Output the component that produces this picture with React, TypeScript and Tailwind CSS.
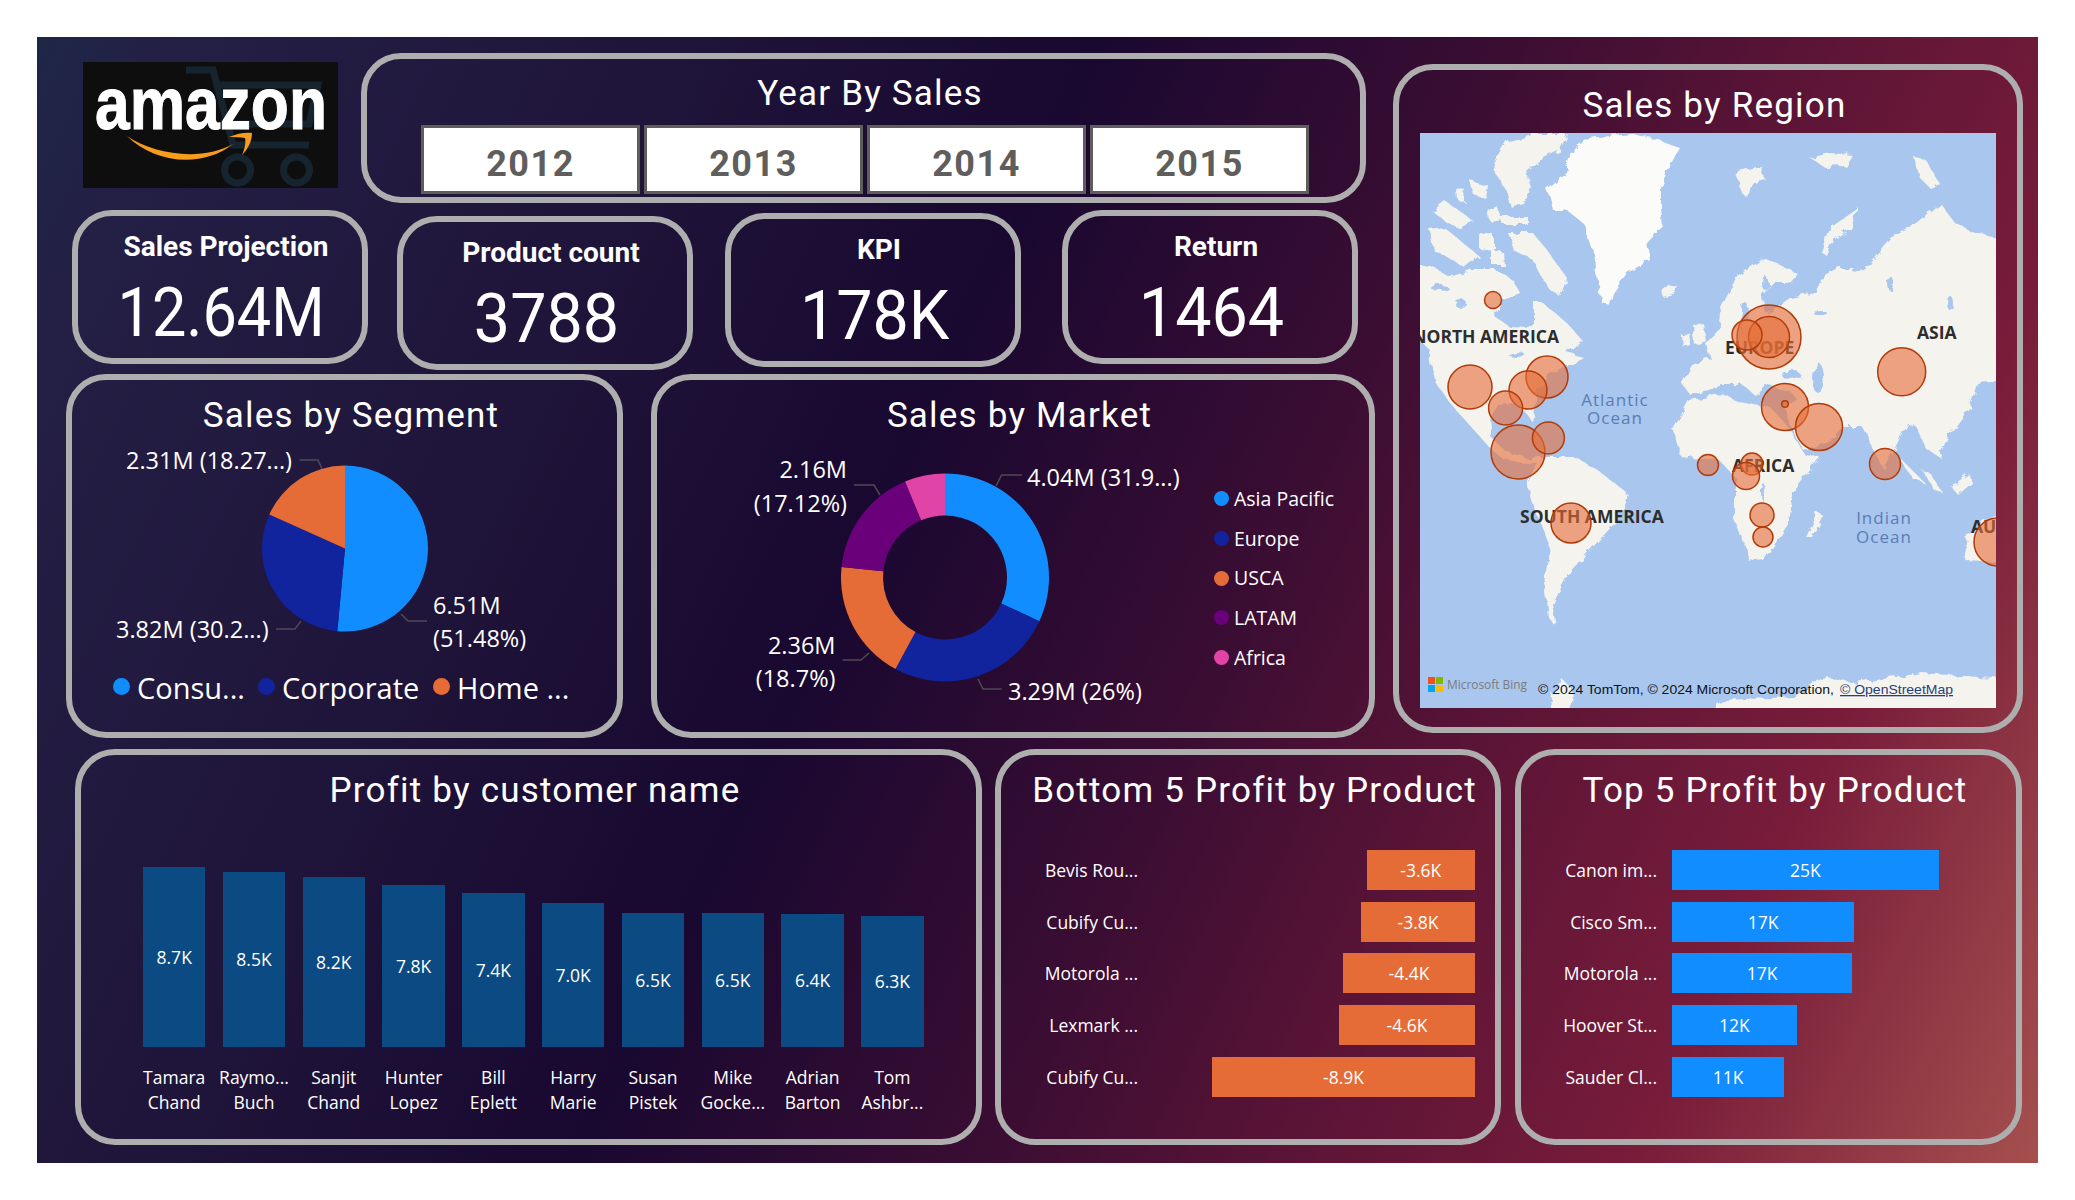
import React from "react";

const BLUE = "#118DFF", NAVY = "#12239E", ORANGE = "#E66C37", PURPLE = "#6B007B", PINK = "#E044A7";

function polar(cx: number, cy: number, r: number, f: number) {
  const a = f * 2 * Math.PI - Math.PI / 2;
  return [cx + r * Math.cos(a), cy + r * Math.sin(a)];
}
function sector(cx: number, cy: number, R: number, r: number, a: number, b: number) {
  const [x1, y1] = polar(cx, cy, R, a);
  const [x2, y2] = polar(cx, cy, R, b);
  const large = b - a > 0.5 ? 1 : 0;
  if (r === 0) return `M${cx},${cy}L${x1},${y1}A${R},${R} 0 ${large} 1 ${x2},${y2}Z`;
  const [x3, y3] = polar(cx, cy, r, b);
  const [x4, y4] = polar(cx, cy, r, a);
  return `M${x1},${y1}A${R},${R} 0 ${large} 1 ${x2},${y2}L${x3},${y3}A${r},${r} 0 ${large} 0 ${x4},${y4}Z`;
}
function slices(vals: [number, string][], cx: number, cy: number, R: number, r: number) {
  let acc = 0;
  return vals.map(([v, c], i) => {
    const d = sector(cx, cy, R, r, acc, acc + v);
    acc += v;
    return <path key={i} d={d} fill={c} />;
  });
}

function Title({ children }: { children: React.ReactNode }) {
  return (
    <div className="mt-[13px] h-[46px] pl-[13px] text-center font-['Roboto',sans-serif] text-[35px] leading-[46px] tracking-[1.2px] text-white">
      {children}
    </div>
  );
}

function Logo() {
  return (
    <svg viewBox="0 0 255 126" className="mt-[9px] ml-[46px] h-[126px] w-[255px] shrink-0 bg-[#0e0e0e]">
      <g fill="none" stroke="#16242f" strokeWidth="7">
        <path d="M103,8H130L150,83H226" />
        <path d="M132,23H235L226,62H143" />
        <circle cx="154.6" cy="108" r="13" />
        <circle cx="213.5" cy="108" r="13" />
      </g>
      <text x="12" y="67" fontFamily="'Liberation Sans',sans-serif" fontWeight="700" fontSize="74" fill="#fff" stroke="#fff" strokeWidth="1" textLength="232" lengthAdjust="spacingAndGlyphs">
        amazon
      </text>
      <path d="M44,74C70,92 118,100 150,82C120,106 72,102 44,74Z" fill="#f79c1d" />
      <path d="M146,75C155,71 163,70 169,71C169,79 165,87 159,93C162,86 163,80 162,76C157,75 151,75 146,75Z" fill="#f79c1d" />
    </svg>
  );
}

function YearPanel() {
  const years = ["2012", "2013", "2014", "2015"];
  return (
    <div className="ml-[23px] box-border h-[150px] w-[1005px] rounded-[40px] border-[6px] border-[#aeaeae]">
      <div className="mt-[12px] h-[46px] pl-[13px] text-center font-['Roboto',sans-serif] text-[35px] leading-[46px] tracking-[1.2px] text-white">Year By Sales</div>
      <div className="mt-[8px] ml-[54px] flex gap-[4px]">
        {years.map((y) => (
          <div key={y} className="box-border h-[69px] w-[219px] border-[3px] border-[#605e5c] bg-white pt-[13px] text-center font-['Roboto',sans-serif] text-[36px] leading-[46px] font-bold tracking-[1.5px] text-[#605e5c]">
            {y}
          </div>
        ))}
      </div>
    </div>
  );
}

function Card({ label, value, cls, vcls }: { label: string; value: string; cls: string; vcls: string }) {
  return (
    <div className={`box-border h-[154px] w-[296px] rounded-[40px] border-[6px] border-[#aeaeae] text-center font-['Roboto',sans-serif] text-white ${cls}`}>
      <div className="mt-[13px] h-[36px] pl-[12px] text-[28px] leading-[36px] font-bold">{label}</div>
      <div className="mt-[12px] pl-[3px] text-[68px] leading-[72px] font-normal">
        <span className={`inline-block ${vcls}`}>{value}</span>
      </div>
    </div>
  );
}

function Leader({ d }: { d: string }) {
  return <path d={d} fill="none" stroke="#4d4a55" strokeWidth="1.5" />;
}

function SegmentPanel() {
  const legend = [
    { c: BLUE, t: "Consu...", w: "w-[145px]" },
    { c: NAVY, t: "Corporate", w: "w-[175px]" },
    { c: ORANGE, t: "Home ...", w: "w-[140px]" },
  ];
  return (
    <div className="ml-[29px] box-border h-[364px] w-[557px] rounded-[40px] border-[6px] border-[#aeaeae]">
      <Title>Sales by Segment</Title>
      <svg viewBox="0 0 545 232" className="block h-[232px] w-[545px] font-['Open_Sans',sans-serif]" fill="#fff" fontSize="23.5">
        {slices([[0.5148, BLUE], [0.3025, NAVY], [0.1827, ORANGE]], 273, 109.5, 83, 0)}
        <Leader d="M227.5,21H246L250,30" />
        <Leader d="M204,190H223L229,182" />
        <Leader d="M329,175L336,182H355" />
        <text x="54" y="30">2.31M (18.27...)</text>
        <text x="44" y="199">3.82M (30.2...)</text>
        <text x="361" y="175">6.51M</text>
        <text x="361" y="208">(51.48%)</text>
      </svg>
      <div className="flex h-[34px] pl-[41px] font-['Open_Sans',sans-serif] text-[29px] leading-[34px] text-white">
        {legend.map((l) => (
          <div key={l.t} className={`flex gap-[7px] ${l.w}`}>
            <span className="mt-[7px] h-[17px] w-[17px] shrink-0 rounded-full" style={{ background: l.c }} />
            <span className="whitespace-nowrap">{l.t}</span>
          </div>
        ))}
      </div>
    </div>
  );
}

function MarketPanel() {
  const legend: [string, string][] = [["Asia Pacific", BLUE], ["Europe", NAVY], ["USCA", ORANGE], ["LATAM", PURPLE], ["Africa", PINK]];
  return (
    <div className="ml-[28px] box-border h-[364px] w-[724px] rounded-[40px] border-[6px] border-[#aeaeae]">
      <Title>Sales by Market</Title>
      <div className="flex">
        <svg viewBox="0 0 557 295" className="block h-[295px] w-[557px] shrink-0 font-['Open_Sans',sans-serif]" fill="#fff" fontSize="23.5">
          {slices([[0.319, BLUE], [0.26, NAVY], [0.187, ORANGE], [0.1712, PURPLE], [0.0628, PINK]], 288, 138.5, 104, 62)}
          <Leader d="M339,47L344.6,36H365" />
          <Leader d="M321,240L326,250H344.6" />
          <Leader d="M185.5,221H204L212,214" />
          <Leader d="M197,46H217L223,56" />
          <text x="370" y="47">4.04M (31.9...)</text>
          <text x="351" y="261">3.29M (26%)</text>
          <text x="178.5" y="215" textAnchor="end">2.36M</text>
          <text x="178.5" y="248" textAnchor="end">(18.7%)</text>
          <text x="190" y="39" textAnchor="end">2.16M</text>
          <text x="190" y="73" textAnchor="end">(17.12%)</text>
        </svg>
        <div className="flex flex-col pt-[40px] font-['Open_Sans',sans-serif] text-[19.5px] leading-[40px] text-white">
          {legend.map(([t, c]) => (
            <div key={t} className="flex h-[39.7px] items-center gap-[5px]">
              <span className="h-[15px] w-[15px] rounded-full" style={{ background: c }} />
              <span>{t}</span>
            </div>
          ))}
        </div>
      </div>
    </div>
  );
}

function WorldMap() {
  const land = [
    // North and Central America
    "M-20,127L13,134L30,144L50,137L77,137L93,147L100,160L83,167L75,184L90,194L115,195L115,170L123,170L147,190L162,207L147,220L163,224L140,237L128,240L118,258L113,290L106,280L95,270L78,272L70,285L72,305L85,318L100,322L112,328L124,324L120,332L107,330L85,328L70,315L52,295L30,270L16,250L12,235L8,215L-20,190Z",
    // South America
    "M124,324L153,324L175,335L207,360L195,390L170,417L145,444L132,470L136,494L128,484L124,450L130,414L111,367L107,350Z",
    // Africa
    "M253,297L269,267L303,262L330,272L352,276L370,296L385,322L400,324L373,360L369,390L344,427L330,429L315,387L315,344L300,328L261,324Z",
    // Eurasia
    "M300,180L320,140L343,124L377,140L368,150L350,150L342,165L345,180L355,175L370,165L395,160L402,145L420,135L445,135L470,105L490,95L520,70L535,90L555,100L600,108L600,247L557,250L550,274L533,297L520,324L507,317L495,292L487,290L475,315L463,335L455,320L443,294L423,294L405,310L383,317L372,295L365,275L378,268L370,258L345,252L335,262L320,250L300,250L290,258L270,262L262,250L272,232L290,225L285,210L298,200Z",
    // Australia, Madagascar, Antarctica
    "M600,380L569,384L548,404L544,427L600,430Z",
    "M398,380L403,382L392,404L386,404Z",
    "M120,600L140,544L153,557L150,600Z",
    "M261,600L303,567L373,564L407,544L436,550L502,540L600,547L600,600Z",
    // Iceland, UK, Ireland, Arctic
    "M273,192L283,190L286,208L275,212Z",
    "M262,204L270,200L271,212L263,214Z",
    "M315,40L342,34L344,45L332,48L328,66L322,60L318,48Z",
    "M402,120L410,95L440,74L430,95L412,108L406,122Z",
    "M390,25L410,20L432,22L425,33L405,34Z",
    "M494,24L505,26L519,50L512,57L500,45Z",
    "M73,30L87,7L113,1L147,1L140,17L120,27L107,37L110,54L103,70L90,74L87,60L80,47L75,40Z",
    "M50,48L68,52L66,66L54,62Z",
    "M35,55L45,57L44,68L36,65Z",
    "M12,78L25,68L40,78L53,88L40,95L25,88Z",
    "M68,76L76,72L82,86L70,88Z",
    "M80,84L108,84L108,92L83,92Z",
    "M10,97L25,95L43,110L58,122L43,134L30,125L13,117Z",
    "M88,100L113,100L127,117L147,145L140,164L127,154L113,127L93,117Z",
    "M60,100L74,102L74,118L60,116Z",
    "M72,118L83,118L84,132L72,132Z",
    "M240,155L256,152L256,160L243,164Z",
    "M502,337L510,340L523,360L515,358Z",
    "M508,302L520,296L525,310L515,316Z",
    "M530,352L548,340L552,350L538,362Z",
    "M480,325L495,340L505,350L492,345Z",
  ];
  const bubbles: [number, number, number][] = [
    [73, 167, 8.5],
    [349, 204, 32],
    [349, 204, 20.5],
    [327, 202, 15],
    [481.7, 238.7, 24],
    [50, 254, 22],
    [127, 244, 21],
    [108, 257, 19],
    [85.6, 275, 17],
    [98, 319, 27],
    [128.4, 305, 16],
    [151, 390, 20],
    [365, 274, 23.5],
    [365, 271, 3.3],
    [399, 294, 23.5],
    [288, 332, 10.5],
    [332, 331, 11],
    [326, 343, 13.5],
    [342, 382, 12],
    [343, 404, 10],
    [465, 331, 15.5],
    [578, 409, 24],
  ];
  return (
    <svg viewBox="0 0 576 575" className="mt-[4px] ml-[21px] block h-[575px] w-[576px] bg-[#a9c6ef] font-['Open_Sans',sans-serif]">
      <defs>
        <filter id="coast" x="-5%" y="-5%" width="110%" height="110%">
          <feTurbulence type="fractalNoise" baseFrequency="0.09" numOctaves="3" seed="4" result="n" />
          <feDisplacementMap in="SourceGraphic" in2="n" scale="9" />
          <feGaussianBlur stdDeviation="0.5" />
        </filter>
      </defs>
      <g filter="url(#coast)">
        <path d="M127,57L147,40L153,14L167,5L213,1L237,7L260,15L253,27L240,54L240,74L242,94L227,110L230,127L207,140L193,160L190,172L182,170L177,147L173,120L163,90L147,77L133,77L130,64Z" fill="#fbfbfa" />
        <g fill="#f4f3ee">
          {land.map((d, i) => (
            <path key={i} d={d} />
          ))}
        </g>
        <g fill="#a9c6ef">
          <ellipse cx="371" cy="242" rx="9" ry="5" />
          <ellipse cx="398" cy="245" rx="6" ry="15" />
          <ellipse cx="325" cy="178" rx="3" ry="9" />
          <ellipse cx="97" cy="222" rx="8" ry="3" />
          <ellipse cx="20" cy="155" rx="9" ry="3" />
          <ellipse cx="40" cy="170" rx="6" ry="4" />
          <ellipse cx="345" cy="150" rx="3" ry="7" />
          <ellipse cx="440" cy="137" rx="8" ry="3" />
          <ellipse cx="470" cy="150" rx="3" ry="7" />
          <ellipse cx="530" cy="170" rx="3" ry="7" />
          <ellipse cx="400" cy="180" rx="7" ry="2" />
          <ellipse cx="343" cy="359" rx="2" ry="9" />
        </g>
      </g>
      <g fontWeight="700" fontSize="17.5" fill="#2d2d2d">
        <text x="139" y="210" textAnchor="end">NORTH AMERICA</text>
        <text x="305" y="221">EUROPE</text>
        <text x="497" y="206">ASIA</text>
        <text x="100" y="390">SOUTH AMERICA</text>
        <text x="312" y="339">AFRICA</text>
        <text x="551" y="400">AU</text>
      </g>
      <g fontSize="17" fill="#5c7db3" textAnchor="middle" letterSpacing="1">
        <text x="195" y="273">Atlantic</text>
        <text x="195" y="291">Ocean</text>
        <text x="464" y="391">Indian</text>
        <text x="464" y="410">Ocean</text>
      </g>
      {bubbles.map(([x, y, r], i) => (
        <circle key={i} cx={x} cy={y} r={r} fill="#e66c37" fillOpacity="0.6" stroke="#b03c0a" strokeWidth="1.5" />
      ))}
      <rect x="8" y="544" width="7" height="7" fill="#f25022" />
      <rect x="16" y="544" width="7" height="7" fill="#7fba00" />
      <rect x="8" y="552" width="7" height="7" fill="#00a4ef" />
      <rect x="16" y="552" width="7" height="7" fill="#ffb900" />
      <text x="27" y="556" fontSize="12" fill="#7b7b7b" textLength="80" lengthAdjust="spacingAndGlyphs">Microsoft Bing</text>
      <text x="118" y="561" fontSize="13" fill="#111" fontFamily="'Liberation Sans',sans-serif" textLength="296" lengthAdjust="spacingAndGlyphs">© 2024 TomTom, © 2024 Microsoft Corporation,</text>
      <text x="420" y="561" fontSize="13" fill="#2a3f7a" textDecoration="underline" fontFamily="'Liberation Sans',sans-serif" textLength="113" lengthAdjust="spacingAndGlyphs">© OpenStreetMap</text>
    </svg>
  );
}

function RegionPanel() {
  return (
    <div className="mt-[27px] box-border h-[669px] w-[630px] shrink-0 rounded-[40px] border-[6px] border-[#aeaeae]">
      <Title>Sales by Region</Title>
      <WorldMap />
    </div>
  );
}

function CustomerPanel() {
  const rows: [string, number, string, string][] = [
    ["8.7K", 180, "Tamara", "Chand"],
    ["8.5K", 175, "Raymo...", "Buch"],
    ["8.2K", 170, "Sanjit", "Chand"],
    ["7.8K", 162, "Hunter", "Lopez"],
    ["7.4K", 154, "Bill", "Eplett"],
    ["7.0K", 144, "Harry", "Marie"],
    ["6.5K", 134, "Susan", "Pistek"],
    ["6.5K", 134, "Mike", "Gocke..."],
    ["6.4K", 133, "Adrian", "Barton"],
    ["6.3K", 131, "Tom", "Ashbr..."],
  ];
  return (
    <div className="ml-[38px] box-border h-[396px] w-[907px] rounded-[40px] border-[6px] border-[#aeaeae]">
      <Title>Profit by customer name</Title>
      <div className="mt-[53px] flex pl-[53.3px] font-['Open_Sans',sans-serif] text-white">
        {rows.map(([v, h, a, b]) => (
          <div key={a + b} className="flex w-[79.8px] flex-col items-center text-[17.5px]">
            <div className="flex h-[180px] w-full items-end justify-center">
              <div className="flex w-[62.5px] items-center justify-center bg-[#0b4a82]" style={{ height: h }}>
                {v}
              </div>
            </div>
            <div className="mt-[18px] h-[50px] w-full text-center leading-[25px] whitespace-nowrap">
              <div>{a}</div>
              <div>{b}</div>
            </div>
          </div>
        ))}
      </div>
    </div>
  );
}

function HBarPanel({ title, rows, color, right, cls, labelW, gap }: { title: string; rows: [string, number, string][]; color: string; right: boolean; cls: string; labelW: string; gap: string }) {
  return (
    <div className={`box-border h-[396px] rounded-[40px] border-[6px] border-[#aeaeae] ${cls}`}>
      <Title>{title}</Title>
      <div className="mt-[36px] flex flex-col gap-[11.7px] font-['Open_Sans',sans-serif] text-[17.5px] text-white">
        {rows.map(([l, w, v], i) => (
          <div key={i} className="flex h-[40px] items-center">
            <div className={`shrink-0 text-right whitespace-nowrap ${labelW}`}>{l}</div>
            <div className={`flex flex-1 ${gap} ${right ? "justify-end" : "justify-start"}`}>
              <div className="flex h-[40px] items-center justify-center" style={{ width: w, background: color }}>
                {v}
              </div>
            </div>
          </div>
        ))}
      </div>
    </div>
  );
}

export default function App() {
  return (
    <div className="h-[1200px] w-[2075px] bg-white p-[37px]">
      <div className="box-border h-[1126px] w-[2001px] bg-[linear-gradient(115deg,#1d2747_0%,#241f45_6%,#1f1439_26%,#190830_42%,#3a0d33_58%,#5f1536_72%,#781c3a_84%,#a5504e_100%)]">
        <div className="flex">
          <div className="w-[1356px] shrink-0 pt-[16px]">
            <div className="flex h-[149px] items-start">
              <Logo />
              <YearPanel />
            </div>
            <div className="mt-[8px] flex h-[159px] items-start">
              <Card label="Sales Projection" value="12.64M" cls="ml-[35px]" vcls="scale-x-90" />
              <Card label="Product count" value="3788" cls="ml-[29px] mt-[6px]" vcls="scale-x-95" />
              <Card label="KPI" value="178K" cls="ml-[32px] mt-[3px]" vcls="scale-x-95" />
              <Card label="Return" value="1464" cls="ml-[41px]" vcls="scale-x-95" />
            </div>
            <div className="mt-[5px] flex">
              <SegmentPanel />
              <MarketPanel />
            </div>
          </div>
          <RegionPanel />
        </div>
        <div className="mt-[11px] flex">
          <CustomerPanel />
          <HBarPanel
            title="Bottom 5 Profit by Product"
            color={ORANGE}
            right
            cls="ml-[13px] w-[506px]"
            labelW="w-[137px]"
            gap="pr-[20px]"
            rows={[
              ["Bevis Rou...", 108.5, "-3.6K"],
              ["Cubify Cu...", 114, "-3.8K"],
              ["Motorola ...", 132, "-4.4K"],
              ["Lexmark ...", 136, "-4.6K"],
              ["Cubify Cu...", 263, "-8.9K"],
            ]}
          />
          <HBarPanel
            title="Top 5 Profit by Product"
            color={BLUE}
            right={false}
            cls="ml-[14px] w-[507px]"
            labelW="w-[136px]"
            gap="pl-[15px]"
            rows={[
              ["Canon im...", 266.5, "25K"],
              ["Cisco Sm...", 182, "17K"],
              ["Motorola ...", 180, "17K"],
              ["Hoover St...", 124.5, "12K"],
              ["Sauder Cl...", 112, "11K"],
            ]}
          />
        </div>
      </div>
    </div>
  );
}
